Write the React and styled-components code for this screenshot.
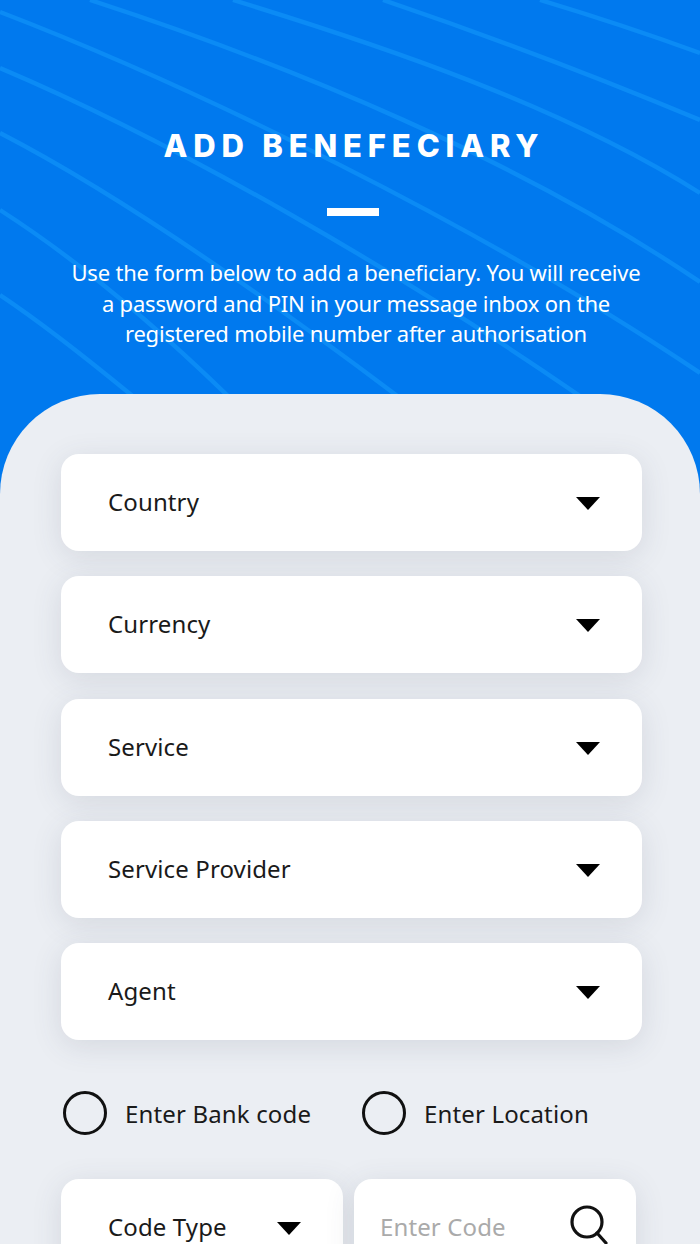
import React from "react";
import styled, { createGlobalStyle } from "styled-components";

const Global = createGlobalStyle`
  html, body { margin: 0; padding: 0; height: 100%; overflow: hidden; }
  body { font-family: "Noto Sans", "Liberation Sans", sans-serif; background: #ebeef3; }
`;
const Page = styled.div`width: 700px; height: 1244px; overflow: hidden; background: #0079ee;`;
const Header = styled.header`
  position: relative; height: 394px; box-sizing: border-box; padding: 128px 0 0 6px;
  display: flex; flex-direction: column; align-items: center;
  background: #0079ee; color: #fff;
`;
const Waves = styled.svg`position: absolute; left: 0; top: 0; filter: blur(0.6px);`;
const Title = styled.h1`
  position: relative; margin: 0 0 0 2px; font: 800 31px/36px Inter, sans-serif; letter-spacing: 5.85px; white-space: nowrap;
`;
const Dash = styled.div`position: relative; width: 52px; height: 8px; background: #fff; margin-top: 44px;`;
const Intro = styled.p`
  position: relative; margin: 41px 0 0 6px; width: 585px; text-align: center;
  font-size: 22px; line-height: 30.5px; letter-spacing: -0.2px;
`;
const Panel = styled.main`
  position: relative; height: 850px; box-sizing: border-box; padding: 60px 58px 0 61px;
  background: #ebeef3; border-radius: 100px 100px 0 0;
`;
const Stack = styled.div`display: flex; flex-direction: column; gap: 25.3px;`;
const Card = styled.div`
  height: 97px; background: #fff; border-radius: 18px;
  box-shadow: 0 6px 30px rgba(60, 70, 90, 0.13);
  display: flex; align-items: center; justify-content: space-between;
  box-sizing: border-box; padding: ${p => p.$pad || "0 42px 2px 47px"};
  font-size: 24px; letter-spacing: 0.12px; color: #1a1a1a; white-space: nowrap;
`;
const Caret = styled.span`
  width: 0; height: 0; flex: none; margin-top: 4px;
  border-left: 12px solid transparent; border-right: 12px solid transparent; border-top: 13px solid #000;
`;
const Radios = styled.div`display: flex; margin: 51px 0 0 2px; height: 44px;`;
const Radio = styled.label`
  display: flex; flex: none; align-items: center; width: 299px; gap: 18px;
  font-size: 24px; letter-spacing: 0.15px; color: #1a1a1a;
`;
const Ring = styled.span`width: 44px; height: 44px; box-sizing: border-box; border: 3px solid #111; border-radius: 50%;`;
const Split = styled.div`display: flex; gap: 11px; margin-top: 44px;`;
const Half = styled(Card)`flex: none; width: 282px;`;
const Placeholder = styled.span`color: #aaa;`;
const Search = styled.svg`flex: none; margin-top: -3px;`;

const lines = [
  "M540 0 Q 620 24 700 53",
  "M383 0 Q 545 55 700 120",
  "M233 0 C 380 45 560 105 700 193",
  "M90 0 C 290 65 520 160 700 282",
  "M0 12 C 190 85 480 225 700 373",
  "M0 68 C 170 140 400 270 600 410",
  "M0 133 C 120 195 270 300 400 398",
  "M0 210 C 70 255 150 320 230 398",
  "M0 295 C 45 325 95 365 135 398",
];
const fields = ["Country", "Currency", "Service", "Service Provider", "Agent"];

export default function App() {
  return (
    <Page>
      <Global />
      <Header>
        <Waves width="700" height="394" viewBox="0 0 700 394" fill="none">
          {lines.map(d => <path key={d} d={d} stroke="#0b8bf5" strokeWidth="4.4" />)}
        </Waves>
        <Title>ADD BENEFECIARY</Title>
        <Dash />
        <Intro>Use the form below to add a beneficiary. You will receive a password and PIN in your message inbox on the registered mobile number after authorisation</Intro>
      </Header>
      <Panel>
        <Stack>
          {fields.map(f => <Card key={f}>{f}<Caret /></Card>)}
        </Stack>
        <Radios>
          <Radio><Ring />Enter Bank code</Radio>
          <Radio><Ring />Enter Location</Radio>
        </Radios>
        <Split>
          <Half>Code Type<Caret /></Half>
          <Half $pad="0 26px 2px 26px">
            <Placeholder>Enter Code</Placeholder>
            <Search width="40" height="40" viewBox="0 0 40 40" fill="none" stroke="#111" strokeWidth="3.2">
              <circle cx="17" cy="17" r="15" />
              <path d="M27 28 L36 38" strokeLinecap="round" />
            </Search>
          </Half>
        </Split>
      </Panel>
    </Page>
  );
}
